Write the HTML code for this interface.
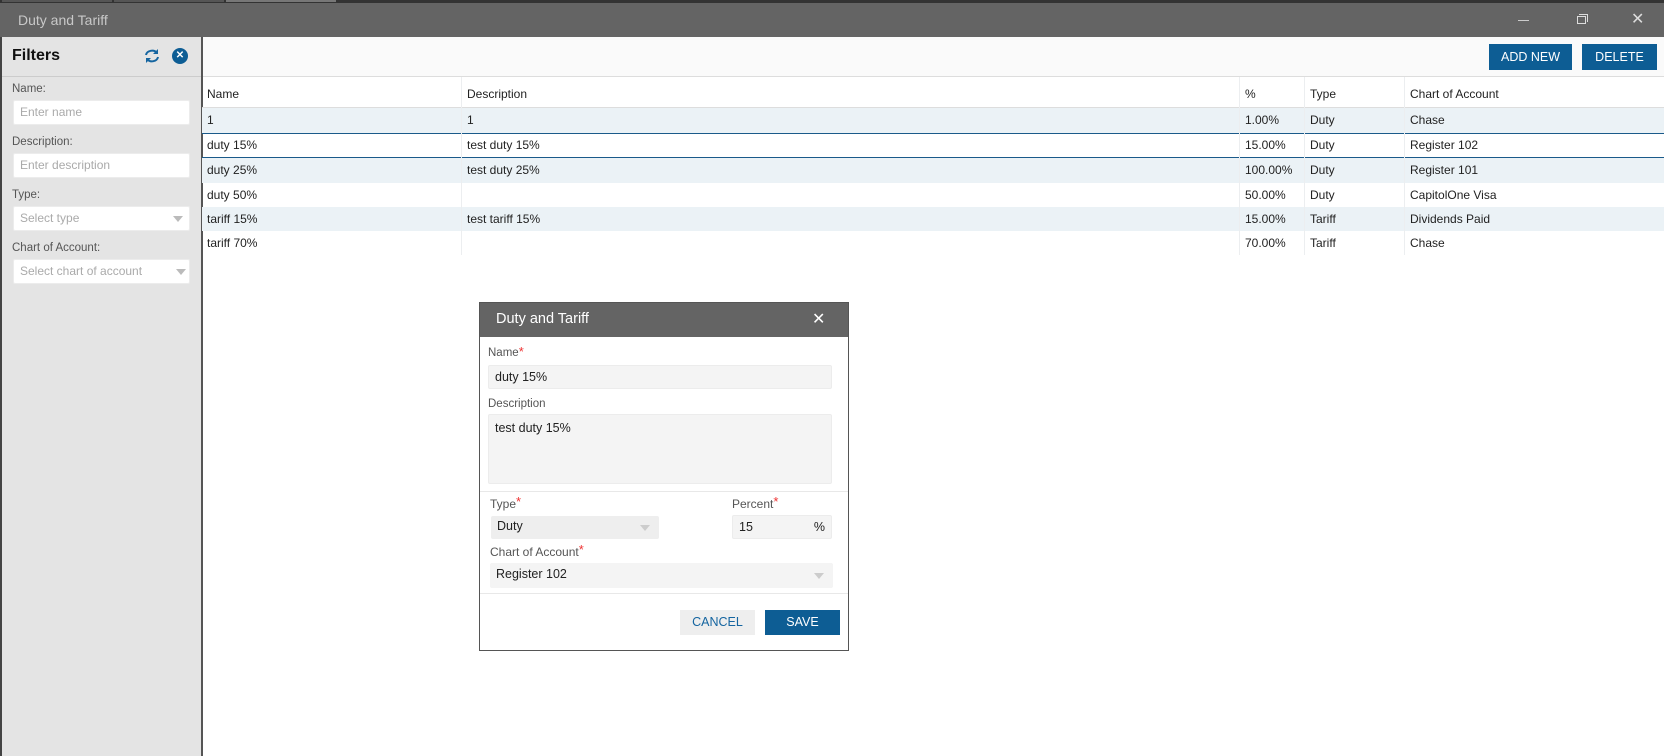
<!DOCTYPE html>
<html><head><style>
*{box-sizing:border-box;margin:0;padding:0}
body{width:1664px;height:756px;position:relative;overflow:hidden;background:#fff;font-family:"Liberation Sans",sans-serif;font-size:12px;color:#222}
.a{position:absolute}
.inp{position:absolute;background:#fff;border:1px solid #ececec;border-radius:2px;color:#aaa;font-size:12px;padding-left:6px;line-height:23px}
.lbl{position:absolute;font-size:11.5px;color:#555}
.tri{position:absolute;width:0;height:0;border-left:5px solid transparent;border-right:5px solid transparent;border-top:6px solid #bbb}
.row{position:absolute;left:202px;width:1462px;height:24px;line-height:24px}
.row span{position:absolute}
.vl{position:absolute;top:77px;height:178px;width:1px;background:#eceef0}
.star{color:#e33;font-size:13px;vertical-align:top;position:relative;top:-3px}
.fin{position:absolute;background:#f4f4f4;border:1px solid #ececec;border-radius:2px;font-size:12.5px;color:#222;padding-left:6px}
</style></head><body>
<div class="a" style="left:0;top:0;width:1664px;height:3px;background:#333"></div>
<div class="a" style="left:2px;top:0;width:110px;height:2px;background:#555"></div>
<div class="a" style="left:114px;top:0;width:110px;height:2px;background:#555"></div>
<div class="a" style="left:226px;top:0;width:110px;height:2px;background:#777"></div>
<div class="a" style="left:0;top:3px;width:1664px;height:34px;background:#646464"></div>
<div class="a" style="left:18px;top:12px;color:#c8c8c8;font-size:14px">Duty and Tariff</div>
<div class="a" style="left:1518px;top:20px;width:11px;height:1px;background:#ccc"></div>
<div class="a" style="left:1577px;top:16px;width:9px;height:8px;border:1px solid #ddd"></div>
<div class="a" style="left:1579px;top:14px;width:9px;height:8px;border-top:1px solid #ddd;border-right:1px solid #ddd"></div>
<div class="a" style="left:1631px;top:9px;color:#ddd;font-size:16px">✕</div>
<div class="a" style="left:0;top:37px;width:2px;height:719px;background:#444"></div>
<div class="a" style="left:2px;top:37px;width:199px;height:719px;background:#e4e4e4"></div>
<div class="a" style="left:201px;top:37px;width:2px;height:719px;background:#555"></div>
<div class="a" style="left:2px;top:76px;width:199px;height:1px;background:#ccc"></div>
<div class="a" style="left:12px;top:47px;font-size:16px;font-weight:bold;color:#111">Filters</div>
<svg class="a" style="left:143px;top:48px" width="18" height="16" viewBox="0 0 18 16"><path d="M3 7a6 5 0 0 1 11-2" stroke="#1565a0" stroke-width="2" fill="none"/><path d="M15 1v5h-5z" fill="#1565a0"/><path d="M15 9a6 5 0 0 1-11 2" stroke="#1565a0" stroke-width="2" fill="none"/><path d="M3 15v-5h5z" fill="#1565a0"/></svg>
<div class="a" style="left:172px;top:48px;width:16px;height:16px;border-radius:50%;background:#0d5d94;color:#fff;font-size:10px;text-align:center;line-height:16px;font-weight:bold">✕</div>
<div class="lbl" style="left:12px;top:83px">Name:</div>
<div class="inp" style="left:13px;top:100px;width:177px;height:25px">Enter name</div>
<div class="lbl" style="left:12px;top:136px">Description:</div>
<div class="inp" style="left:13px;top:153px;width:177px;height:25px">Enter description</div>
<div class="lbl" style="left:12px;top:189px">Type:</div>
<div class="inp" style="left:13px;top:206px;width:177px;height:25px">Select type</div>
<div class="tri" style="left:173px;top:216px"></div>
<div class="lbl" style="left:12px;top:242px">Chart of Account:</div>
<div class="inp" style="left:13px;top:259px;width:177px;height:25px">Select chart of account</div>
<div class="tri" style="left:176px;top:269px"></div>

<div class="a" style="left:203px;top:37px;width:1461px;height:40px;background:#fafafa;border-bottom:1px solid #ddd"></div>
<div class="a" style="left:1489px;top:44px;width:83px;height:26px;background:#0d5d94;color:#fff;font-size:12.5px;text-align:center;line-height:26px">ADD NEW</div>
<div class="a" style="left:1582px;top:44px;width:75px;height:26px;background:#0d5d94;color:#fff;font-size:12.5px;text-align:center;line-height:26px">DELETE</div>

<div class="row" style="top:80px;height:28px;line-height:28px;border-bottom:1px solid #ddd"><span style="left:5px">Name</span><span style="left:265px">Description</span><span style="left:1043px">%</span><span style="left:1108px">Type</span><span style="left:1208px">Chart of Account</span></div>
<div class="row" style="top:108px;height:25px;background:#ebf2f6"><span style="left:5px">1</span><span style="left:265px">1</span><span style="left:1043px">1.00%</span><span style="left:1108px">Duty</span><span style="left:1208px">Chase</span></div>
<div class="row" style="top:133px;height:25px;border-top:1px solid #1a5a8a;border-bottom:1px solid #1a5a8a;line-height:23px"><span style="left:5px">duty 15%</span><span style="left:265px">test duty 15%</span><span style="left:1043px">15.00%</span><span style="left:1108px">Duty</span><span style="left:1208px">Register 102</span></div>
<div class="row" style="top:158px;height:25px;background:#ebf2f6"><span style="left:5px">duty 25%</span><span style="left:265px">test duty 25%</span><span style="left:1043px">100.00%</span><span style="left:1108px">Duty</span><span style="left:1208px">Register 101</span></div>
<div class="row" style="top:183px"><span style="left:5px">duty 50%</span><span style="left:1043px">50.00%</span><span style="left:1108px">Duty</span><span style="left:1208px">CapitolOne Visa</span></div>
<div class="row" style="top:207px;background:#ebf2f6"><span style="left:5px">tariff 15%</span><span style="left:265px">test tariff 15%</span><span style="left:1043px">15.00%</span><span style="left:1108px">Tariff</span><span style="left:1208px">Dividends Paid</span></div>
<div class="row" style="top:231px"><span style="left:5px">tariff 70%</span><span style="left:1043px">70.00%</span><span style="left:1108px">Tariff</span><span style="left:1208px">Chase</span></div>
<div class="vl" style="left:461px"></div><div class="vl" style="left:1239px"></div><div class="vl" style="left:1304px"></div><div class="vl" style="left:1404px"></div>

<div class="a" style="left:479px;top:302px;width:370px;height:349px;background:#fff;border:1px solid #555"></div>
<div class="a" style="left:480px;top:303px;width:368px;height:34px;background:#646464"></div>
<div class="a" style="left:496px;top:311px;color:#fff;font-size:14.5px">Duty and Tariff</div>
<div class="a" style="left:812px;top:309px;color:#fff;font-size:16px">✕</div>
<div class="lbl" style="left:488px;top:347px">Name<span class="star">*</span></div>
<div class="fin" style="left:488px;top:365px;width:344px;height:24px;line-height:22px">duty 15%</div>
<div class="lbl" style="left:488px;top:398px">Description</div>
<div class="fin" style="left:488px;top:414px;width:344px;height:70px;padding-top:6px">test duty 15%</div>
<div class="a" style="left:480px;top:491px;width:368px;height:1px;background:#e8e8e8"></div>
<div class="lbl" style="left:490px;top:497px;font-size:12px">Type<span class="star">*</span></div>
<div class="fin" style="left:491px;top:516px;width:168px;height:23px;line-height:21px;border:none;background:#eee">Duty</div>
<div class="tri" style="left:640px;top:525px;border-top-color:#ccc"></div>
<div class="lbl" style="left:732px;top:497px;font-size:12px">Percent<span class="star">*</span></div>
<div class="fin" style="left:732px;top:515px;width:100px;height:24px;line-height:22px">15<span style="position:absolute;right:6px">%</span></div>
<div class="lbl" style="left:490px;top:545px;font-size:12px">Chart of Account<span class="star">*</span></div>
<div class="fin" style="left:490px;top:563px;width:343px;height:25px;line-height:23px;border:none">Register 102</div>
<div class="tri" style="left:814px;top:573px;border-top-color:#ccc"></div>
<div class="a" style="left:480px;top:593px;width:368px;height:1px;background:#e8e8e8"></div>
<div class="a" style="left:680px;top:610px;width:75px;height:25px;background:#eee;color:#1565a0;font-size:12.5px;text-align:center;line-height:25px">CANCEL</div>
<div class="a" style="left:765px;top:610px;width:75px;height:25px;background:#0d5d94;color:#fff;font-size:12.5px;text-align:center;line-height:25px">SAVE</div>
</body></html>
